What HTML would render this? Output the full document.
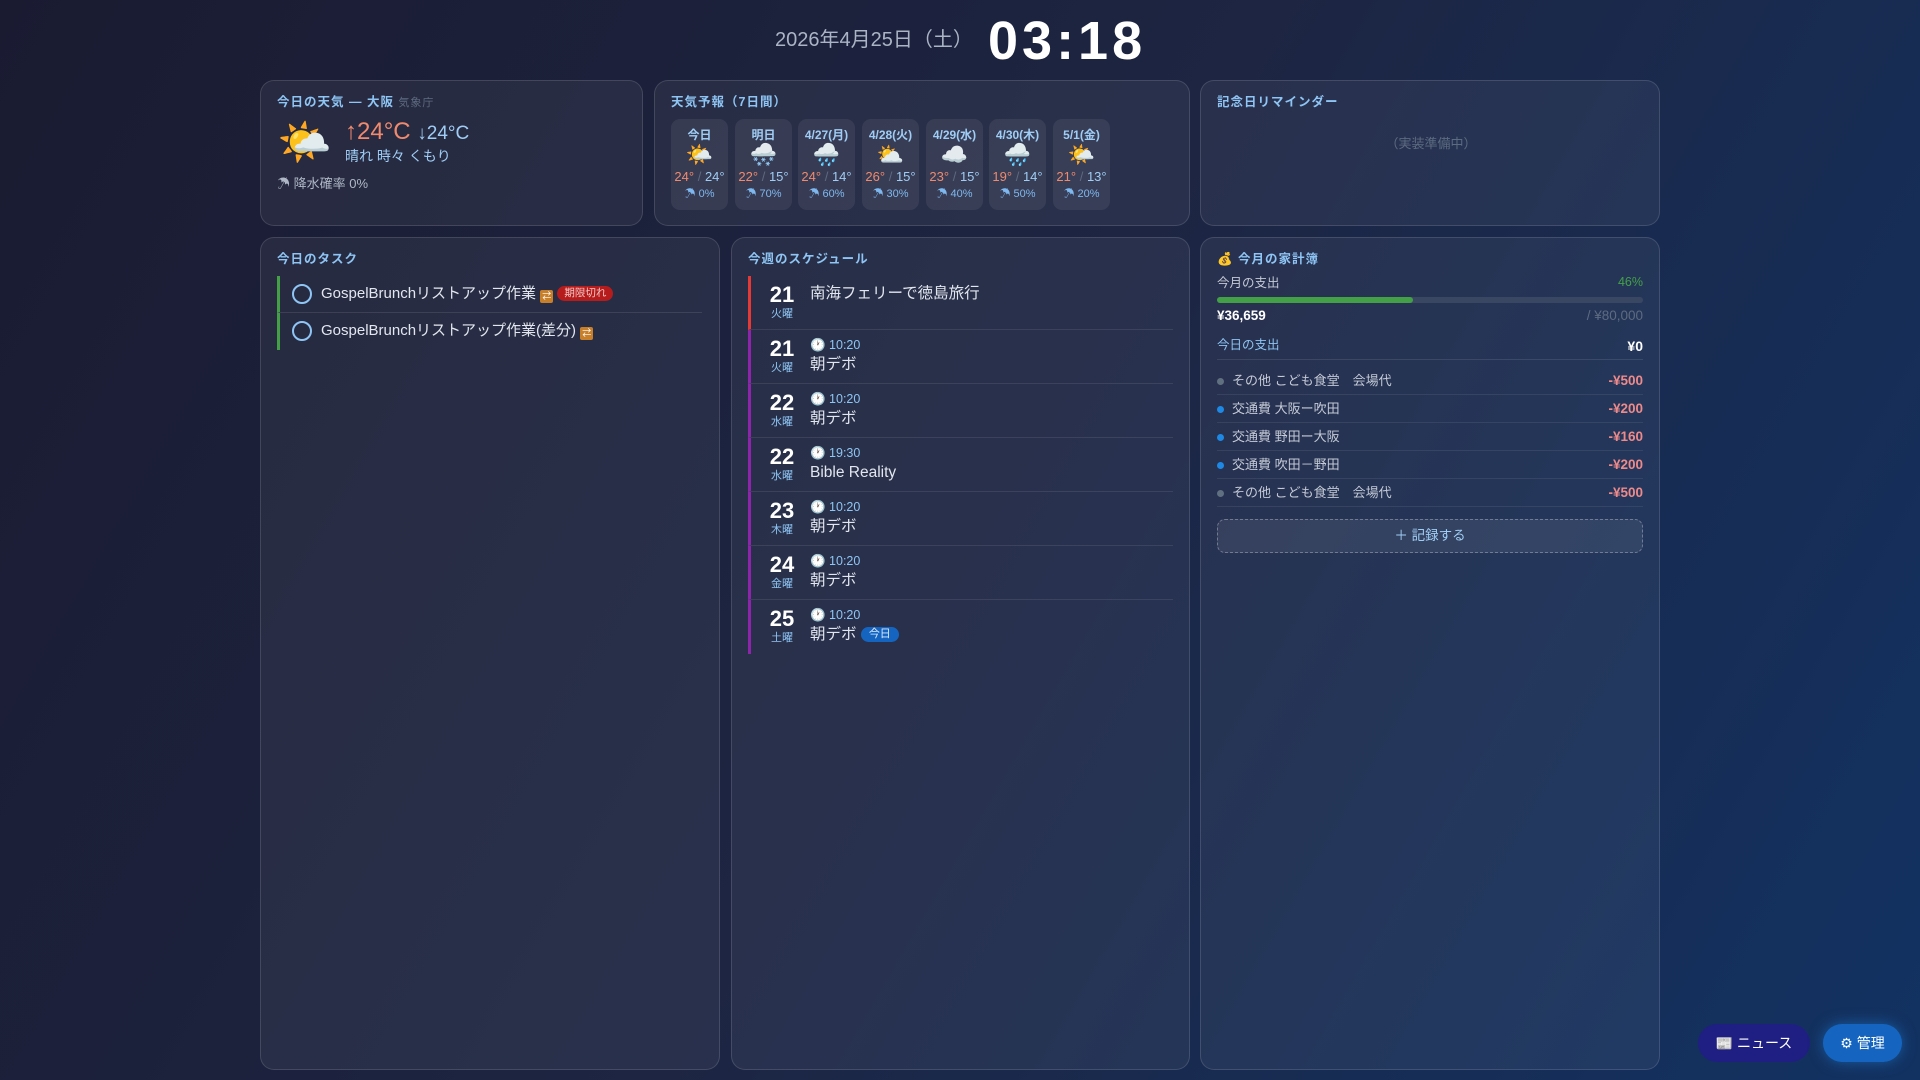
<!DOCTYPE html><html><head><meta charset="utf-8"><style>
*{box-sizing:border-box;margin:0;padding:0}
body{width:1920px;height:1080px;overflow:hidden;font-family:"Liberation Sans","Noto Sans CJK JP",sans-serif;line-height:1.2;background:linear-gradient(120deg,#1a1b31 0%,#1d2542 50%,#123262 100%);color:#dfe4ee;position:relative}
.date{position:absolute;left:775px;top:28px;font-size:20px;color:#aab4c4}
.clock{position:absolute;left:988px;top:9px;font-size:54px;font-weight:bold;color:#fff;letter-spacing:4px}
.card{position:absolute;background:rgba(255,255,255,0.055);border:1px solid rgba(255,255,255,0.13);border-radius:14px}
.ttl{position:absolute;left:16px;top:14px;font-size:12.5px;font-weight:bold;color:#8ec5f4;letter-spacing:1px}
.fc{position:absolute;top:38px;width:57px;height:91px;background:rgba(255,255,255,0.07);border-radius:9px;text-align:center}
.fc .d{font-size:12px;font-weight:bold;color:#9fcdf5;margin-top:9px}
.fc .i{font-size:22px;line-height:26px}
.fc .t{font-size:13px;margin-top:1px}
.fc .p{font-size:11px;color:#7fb8ef;margin-top:3px}
.hi{color:#f08a6e}.lo{color:#9fcdf5}.sl{color:#5c6a80}
.task{position:absolute;left:16px;width:425px;height:37px;border-left:3px solid #43a047;font-size:15px;color:#e2e6ee}
.task .c{position:absolute;left:12px;top:8px;width:20px;height:20px;border:2px solid #8ec5f4;border-radius:50%}
.task .x{position:absolute;left:41px;top:9px}
.bad{display:inline-block;background:#b71c1c;color:#f3c7c7;font-size:10.5px;padding:1px 7px;border-radius:8px;vertical-align:2px}
.rep{display:inline-block;width:13px;height:13px;background:#c77f2a;border-radius:2px;font-size:9px;line-height:13px;text-align:center;color:#fff;vertical-align:-1px}
.ev{position:absolute;left:16px;width:425px;height:54px;border-left:3px solid #8e24aa;border-bottom:1px solid rgba(255,255,255,0.09)}
.ev .n{position:absolute;left:14px;top:6px;width:34px;text-align:center;font-size:22px;font-weight:bold;color:#fff}
.ev .w{position:absolute;left:14px;top:32px;width:34px;text-align:center;font-size:11px;color:#8ec5f4}
.ev .tm{position:absolute;left:59px;top:8px;font-size:12.5px;color:#8ec5f4}
.ev .s{position:absolute;left:59px;top:26px;font-size:15.5px;color:#e2e6ee}
.row{position:absolute;left:16px;width:426px;height:28px;border-bottom:1px solid rgba(255,255,255,0.08);font-size:13px;color:#c4cad6}
.row .dot{position:absolute;left:0;top:11px;width:7px;height:7px;border-radius:50%}
.row .l{position:absolute;left:15px;top:6px}
.row .a{position:absolute;right:0;top:6px;color:#ef8a8a;font-weight:bold;font-size:13.5px}
.btn{position:absolute;top:1024px;height:38px;border-radius:19px;color:#fff;font-size:14px;text-align:center;line-height:38px}
</style></head><body>
<div class="date">2026年4月25日（土）</div>
<div class="clock">03:18</div>

<div class="card" style="left:260px;top:80px;width:383px;height:146px">
<div class="ttl">今日の天気 — 大阪 <span style="color:#5d6b80;font-weight:normal;font-size:11px">気象庁</span></div>
<div style="position:absolute;left:16px;top:37px;font-size:44px;line-height:50px">🌤️</div>
<div style="position:absolute;left:84px;top:37px;font-size:24px;color:#f08a6e">↑24°C <span style="font-size:19px;color:#9fcdf5">↓24°C</span></div>
<div style="position:absolute;left:84px;top:67px;font-size:14px;color:#9fcdf5">晴れ 時々 くもり</div>
<div style="position:absolute;left:16px;top:95px;font-size:13px;color:#b0b8c6">☂ 降水確率 0%</div>
</div>

<div class="card" style="left:654px;top:80px;width:536px;height:146px">
<div class="ttl">天気予報（7日間）</div>
<div class="fc" style="left:16px"><div class="d">今日</div><div class="i">🌤️</div><div class="t"><span class="hi">24°</span> <span class="sl">/</span> <span class="lo">24°</span></div><div class="p">☂ 0%</div></div>
<div class="fc" style="left:80px"><div class="d">明日</div><div class="i">🌨️</div><div class="t"><span class="hi">22°</span> <span class="sl">/</span> <span class="lo">15°</span></div><div class="p">☂ 70%</div></div>
<div class="fc" style="left:143px"><div class="d">4/27(月)</div><div class="i">🌧️</div><div class="t"><span class="hi">24°</span> <span class="sl">/</span> <span class="lo">14°</span></div><div class="p">☂ 60%</div></div>
<div class="fc" style="left:207px"><div class="d">4/28(火)</div><div class="i">⛅</div><div class="t"><span class="hi">26°</span> <span class="sl">/</span> <span class="lo">15°</span></div><div class="p">☂ 30%</div></div>
<div class="fc" style="left:271px"><div class="d">4/29(水)</div><div class="i">☁️</div><div class="t"><span class="hi">23°</span> <span class="sl">/</span> <span class="lo">15°</span></div><div class="p">☂ 40%</div></div>
<div class="fc" style="left:334px"><div class="d">4/30(木)</div><div class="i">🌧️</div><div class="t"><span class="hi">19°</span> <span class="sl">/</span> <span class="lo">14°</span></div><div class="p">☂ 50%</div></div>
<div class="fc" style="left:398px"><div class="d">5/1(金)</div><div class="i">🌤️</div><div class="t"><span class="hi">21°</span> <span class="sl">/</span> <span class="lo">13°</span></div><div class="p">☂ 20%</div></div>
</div>

<div class="card" style="left:1200px;top:80px;width:460px;height:146px">
<div class="ttl">記念日リマインダー</div>
<div style="position:absolute;left:0;width:460px;top:55px;text-align:center;font-size:13px;color:#5d6b80">（実装準備中）</div>
</div>

<div class="card" style="left:260px;top:237px;width:460px;height:833px">
<div class="ttl">今日のタスク</div>
<div class="task" style="top:38px;border-bottom:1px solid rgba(255,255,255,0.1)"><div class="c"></div><div class="x">GospelBrunchリストアップ作業 <span class="rep">⇄</span> <span class="bad">期限切れ</span></div></div>
<div class="task" style="top:75px"><div class="c"></div><div class="x">GospelBrunchリストアップ作業(差分) <span class="rep">⇄</span></div></div>
</div>

<div class="card" style="left:731px;top:237px;width:459px;height:833px">
<div class="ttl">今週のスケジュール</div>
<div class="ev" style="top:38px;border-left-color:#e53935"><div class="n">21</div><div class="w">火曜</div><div class="s" style="top:9px">南海フェリーで徳島旅行</div></div>
<div class="ev" style="top:92px"><div class="n">21</div><div class="w">火曜</div><div class="tm">🕐 10:20</div><div class="s">朝デボ</div></div>
<div class="ev" style="top:146px"><div class="n">22</div><div class="w">水曜</div><div class="tm">🕐 10:20</div><div class="s">朝デボ</div></div>
<div class="ev" style="top:200px"><div class="n">22</div><div class="w">水曜</div><div class="tm">🕐 19:30</div><div class="s">Bible Reality</div></div>
<div class="ev" style="top:254px"><div class="n">23</div><div class="w">木曜</div><div class="tm">🕐 10:20</div><div class="s">朝デボ</div></div>
<div class="ev" style="top:308px"><div class="n">24</div><div class="w">金曜</div><div class="tm">🕐 10:20</div><div class="s">朝デボ</div></div>
<div class="ev" style="top:362px;border-bottom:none"><div class="n">25</div><div class="w">土曜</div><div class="tm">🕐 10:20</div><div class="s">朝デボ <span style="display:inline-block;background:#1565c0;color:#dbe9ff;font-size:11px;padding:1px 8px;border-radius:9px;vertical-align:2px">今日</span></div></div>
</div>

<div class="card" style="left:1200px;top:237px;width:460px;height:833px">
<div class="ttl">💰 今月の家計簿</div>
<div style="position:absolute;left:16px;top:38px;font-size:12.5px;color:#c4cad6">今月の支出</div>
<div style="position:absolute;right:16px;top:37px;font-size:12.5px;color:#43a047">46%</div>
<div style="position:absolute;left:16px;top:59px;width:426px;height:6px;border-radius:3px;background:#3a4763"><div style="width:196px;height:6px;border-radius:3px;background:#43a047"></div></div>
<div style="position:absolute;left:16px;top:70px;font-size:13.5px;font-weight:bold;color:#fff">¥36,659</div>
<div style="position:absolute;right:16px;top:70px;font-size:13.5px;color:#5d6b80">/ ¥80,000</div>
<div style="position:absolute;left:16px;top:100px;width:426px;height:22px;border-bottom:1px solid rgba(255,255,255,0.1);font-size:12.5px;color:#8ec5f4">今日の支出<span style="position:absolute;right:0;top:0;color:#fff;font-weight:bold;font-size:14px">¥0</span></div>
<div class="row" style="top:129px"><div class="dot" style="background:#607080"></div><div class="l">その他 こども食堂　会場代</div><div class="a">-¥500</div></div>
<div class="row" style="top:157px"><div class="dot" style="background:#1e88e5"></div><div class="l">交通費 大阪ー吹田</div><div class="a">-¥200</div></div>
<div class="row" style="top:185px"><div class="dot" style="background:#1e88e5"></div><div class="l">交通費 野田ー大阪</div><div class="a">-¥160</div></div>
<div class="row" style="top:213px"><div class="dot" style="background:#1e88e5"></div><div class="l">交通費 吹田－野田</div><div class="a">-¥200</div></div>
<div class="row" style="top:241px"><div class="dot" style="background:#607080"></div><div class="l">その他 こども食堂　会場代</div><div class="a">-¥500</div></div>
<div style="position:absolute;left:16px;top:281px;width:426px;height:34px;border:1px dashed rgba(255,255,255,0.3);border-radius:8px;background:rgba(255,255,255,0.07);text-align:center;line-height:32px;font-size:13.5px;color:#9fcdf5">＋ 記録する</div>
</div>

<div class="btn" style="left:1698px;width:112px;background:#1f1f83">📰 ニュース</div>
<div class="btn" style="left:1823px;width:79px;background:#1565c0;box-shadow:0 0 14px rgba(30,136,229,0.5)">⚙ 管理</div>
</body></html>
